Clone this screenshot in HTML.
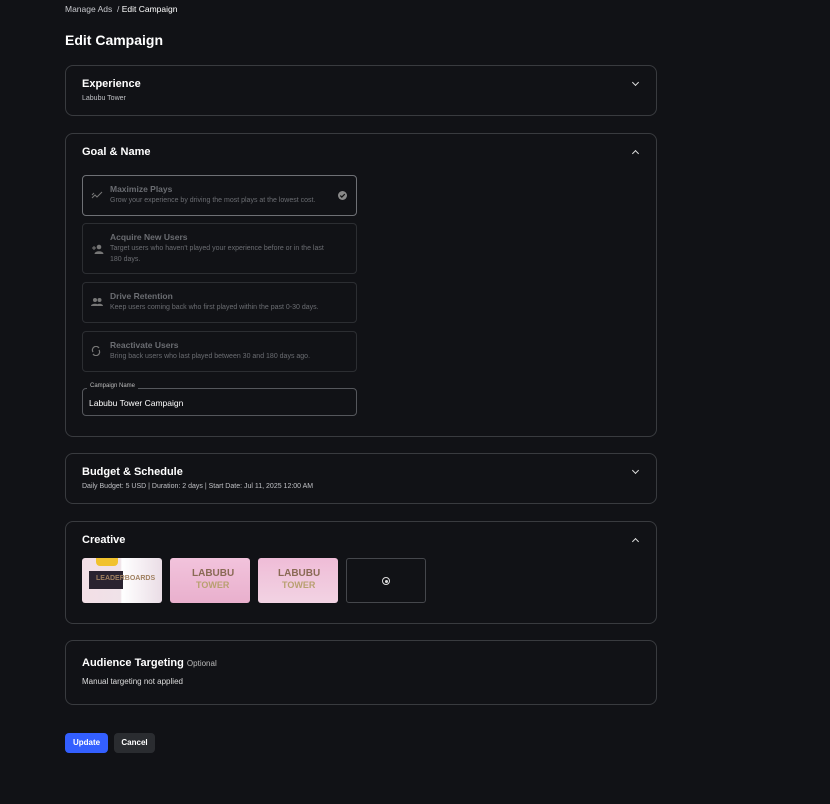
<!DOCTYPE html>
<html><head><style>
*{box-sizing:border-box;margin:0;padding:0}
body{width:830px;height:804px;background:#111216;font-family:"Liberation Sans",sans-serif;color:#fff;position:relative;overflow:hidden}
.a{position:absolute}
.card{position:absolute;left:65px;width:592px;border:1px solid #393b3f;border-radius:8px}
.h{position:absolute;left:16px;font-size:11px;font-weight:bold;color:#fff}
.sub{position:absolute;left:16px;font-size:7px;color:#bfc0c4}
.chev{position:absolute;right:18px;width:5px;height:5px;border-right:1.3px solid #ddd;border-bottom:1.3px solid #ddd}
.opt{position:absolute;left:16px;width:275px;border:1px solid #2c2e32;border-radius:4px}
.opt .t{position:absolute;left:27px;font-size:8.5px;font-weight:bold;color:#6b6d72}
.opt .d{position:absolute;left:27px;font-size:7px;color:#6b6d72;line-height:11px;width:225px}
.opt svg{position:absolute;left:8px}
.th{position:absolute;top:36px;width:80px;height:45px;border-radius:3px;overflow:hidden}
</style></head><body>
<div class="a" style="left:65px;top:4px;font-size:8.5px;color:#c8c9ce">Manage Ads &nbsp;/ <span style="color:#fff">Edit Campaign</span></div>
<div class="a" style="left:65px;top:32px;font-size:14px;font-weight:bold">Edit Campaign</div>

<div class="card" style="top:65px;height:51px">
 <div class="h" style="top:12px">Experience</div>
 <div class="sub" style="top:29px">Labubu Tower</div>
 <div class="chev" style="top:14px;transform:rotate(45deg)"></div>
</div>

<div class="card" style="top:133px;height:304px">
 <div class="h" style="top:12px">Goal &amp; Name</div>
 <div class="chev" style="top:17px;transform:rotate(-135deg)"></div>
 <div class="opt" style="top:41px;height:41px;border-color:#6e7075">
  <svg style="top:14px" width="12" height="10" viewBox="0 0 12 10"><path d="M1 8l3-3 2 2 5-5M1 5l2-2" stroke="#777" fill="none" stroke-width="1"/></svg>
  <div class="t" style="top:8px">Maximize Plays</div>
  <div class="d" style="top:19px;width:240px">Grow your experience by driving the most plays at the lowest cost.</div>
  <svg style="left:auto;right:9px;top:15px" width="9" height="9" viewBox="0 0 9 9"><circle cx="4.5" cy="4.5" r="4.5" fill="#888"/><path d="M2.3 4.6l1.5 1.5 3-3" stroke="#111" stroke-width="1.2" fill="none"/></svg>
 </div>
 <div class="opt" style="top:89px;height:51px">
  <svg style="top:20px" width="13" height="10" viewBox="0 0 13 10"><circle cx="8" cy="3" r="2.3" fill="#777"/><path d="M4 10c0-3 8-3 8 0z M1 4h4M3 2v4" fill="#777" stroke="#777"/></svg>
  <div class="t" style="top:8px">Acquire New Users</div>
  <div class="d" style="top:19px">Target users who haven't played your experience before or in the last 180 days.</div>
 </div>
 <div class="opt" style="top:148px;height:41px">
  <svg style="top:15px" width="12" height="8" viewBox="0 0 12 8"><circle cx="4" cy="2" r="2" fill="#777"/><circle cx="8.5" cy="2" r="2" fill="#777"/><path d="M0 8c0-3 8-3 8 0zM5 8c0-3 7-3 7 0z" fill="#777"/></svg>
  <div class="t" style="top:8px">Drive Retention</div>
  <div class="d" style="top:19px;width:240px">Keep users coming back who first played within the past 0-30 days.</div>
 </div>
 <div class="opt" style="top:197px;height:41px">
  <svg style="top:14px" width="10" height="10" viewBox="0 0 10 10"><path d="M2 6a3.5 3.5 0 0 1 6-4M8 4a3.5 3.5 0 0 1-6 4" stroke="#777" fill="none" stroke-width="1.2"/></svg>
  <div class="t" style="top:8px">Reactivate Users</div>
  <div class="d" style="top:19px;width:240px">Bring back users who last played between 30 and 180 days ago.</div>
 </div>
 <div class="opt" style="top:254px;height:28px;border-color:#55575c">
  <div class="a" style="left:4px;top:-6px;background:#111216;padding:0 3px;font-size:6px;color:#bbb">Campaign Name</div>
  <div class="a" style="left:6px;top:9px;font-size:8.5px;color:#fff">Labubu Tower Campaign</div>
 </div>
</div>

<div class="card" style="top:453px;height:51px">
 <div class="h" style="top:12px">Budget &amp; Schedule</div>
 <div class="sub" style="top:29px">Daily Budget: 5 USD | Duration: 2 days | Start Date: Jul 11, 2025 12:00 AM</div>
 <div class="chev" style="top:14px;transform:rotate(45deg)"></div>
</div>

<div class="card" style="top:521px;height:103px">
 <div class="h" style="top:12px">Creative</div>
 <div class="chev" style="top:17px;transform:rotate(-135deg)"></div>
 <div class="th" style="left:16px;background:linear-gradient(90deg,#f3dfe6 0,#efe2e8 48%,#fff 50%,#eadde6 100%)"><div class="a" style="left:7px;top:13px;width:34px;height:18px;background:#2a2330"></div><div class="a" style="left:14px;top:0;width:22px;height:8px;background:#f1c22e;border-radius:0 0 4px 4px"></div><div class="a" style="left:14px;top:17px;font-size:7px;font-weight:bold;color:#a08060">LEADERBOARDS</div></div>
 <div class="th" style="left:104px;background:linear-gradient(#f2c3dc,#e9b0cd)"><div class="a" style="left:22px;top:10px;font-size:10px;font-weight:bold;color:#8a6a55">LABUBU</div><div class="a" style="left:26px;top:22px;font-size:9px;font-weight:bold;color:#b8a070">TOWER</div></div>
 <div class="th" style="left:192px;background:linear-gradient(#efbcd7,#f2d3e3)"><div class="a" style="left:20px;top:10px;font-size:10px;font-weight:bold;color:#8a6a55">LABUBU</div><div class="a" style="left:24px;top:22px;font-size:9px;font-weight:bold;color:#b8a070">TOWER</div></div>
 <div class="a" style="left:280px;top:36px;width:80px;height:45px;border:1px solid #45474c;border-radius:3px"><div class="a" style="left:35px;top:18px;width:8px;height:8px;border:1px solid #ddd;border-radius:50%"><div class="a" style="left:1.5px;top:1.5px;width:3px;height:3px;background:#ddd;border-radius:50%"></div></div></div>
</div>

<div class="card" style="top:640px;height:65px">
 <div class="h" style="top:16px">Audience Targeting <span style="font-weight:normal;font-size:8px;color:#bbb">Optional</span></div>
 <div class="a" style="left:16px;top:36px;font-size:8px;color:#ddd">Manual targeting not applied</div>
</div>

<div class="a" style="left:65px;top:733px;width:43px;height:20px;background:#335fff;border-radius:4px;font-size:8px;font-weight:bold;text-align:center;line-height:20px">Update</div>
<div class="a" style="left:114px;top:733px;width:41px;height:20px;background:#2a2c30;border-radius:4px;font-size:8px;font-weight:bold;text-align:center;line-height:20px">Cancel</div>
</body></html>
